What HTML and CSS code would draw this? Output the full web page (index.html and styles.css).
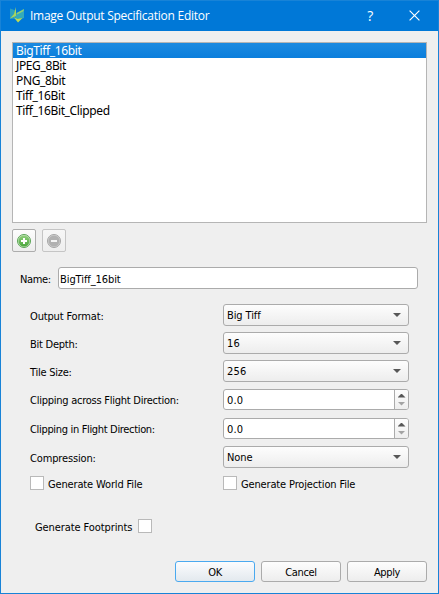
FILE: index.html
```html
<!DOCTYPE html>
<html lang="en">
<head>
<meta charset="utf-8">
<title>Image Output Specification Editor</title>
<link rel="stylesheet" href="styles.css">
</head>
<body>
<div class="window">
  <header class="titlebar">
    <svg class="logo" width="16" height="18" viewBox="0 0 16 18">
      <path d="M1 2.500 7 4.500v8L1 13z" fill="#2b9fc0"/>
      <path d="M7 1v9L1 12.500 5 8z" fill="#a9d45c"/>
      <path d="M15 3 14.500 7 7.500 10V7z" fill="#8fd077"/>
      <path d="M7 9 15 5v7l-8 2z" fill="#35aaba"/>
      <path d="M5 11.500 8.500 13l5-1L9 16.500z" fill="#bfdc50"/>
    </svg>
    <h1 class="title">Image Output Specification Editor</h1>
    <span class="help">?</span>
    <svg class="close" width="11" height="11" viewBox="0 0 11 11"><path d="M.6.6 10.4 10.4M10.4.6.6 10.4" stroke="#fff" stroke-width="1.15"/></svg>
  </header>
  <main class="content">
    <ul class="list">
      <li class="selected">BigTiff_16bit</li>
      <li>JPEG_8Bit</li>
      <li>PNG_8bit</li>
      <li>Tiff_16Bit</li>
      <li>Tiff_16Bit_Clipped</li>
    </ul>
    <div class="tools">
      <button class="tool"><svg width="16" height="16" viewBox="0 0 16 16"><defs><linearGradient id="g" x2="0" y2="1"><stop stop-color="#91d07d"/><stop offset="1" stop-color="#4aa63b"/></linearGradient></defs><circle cx="8" cy="8" r="6.5" fill="#cfe8c6" stroke="#5aa455"/><circle cx="8" cy="8" r="5.5" fill="url(#g)"/><path d="M8 5v6M5 8h6" stroke="#fff" stroke-width="2"/></svg></button>
      <button class="tool off"><svg width="16" height="16" viewBox="0 0 16 16"><circle cx="8" cy="8" r="6.5" fill="#d4d4d4" stroke="#a6a6a6"/><circle cx="8" cy="8" r="5.5" fill="#b1b1b1"/><path d="M5 8h6" stroke="#f4f4f4" stroke-width="2"/></svg></button>
    </div>
    <div class="name-row"><label class="name-label">Name:</label><div class="field">BigTiff_16bit</div></div>
    <div class="form">
      <label class="wide">Output Format:</label><div class="combo">Big Tiff<i class="down"></i></div>
      <label>Bit Depth:</label><div class="combo num">16<i class="down"></i></div>
      <label>Tile Size:</label><div class="combo num">256<i class="down"></i></div>
      <label>Clipping across Flight Direction:</label><div class="spin num"><span>0.0</span><div class="steps"><i class="up"></i><i class="down pale"></i></div></div>
      <label class="tight">Clipping in Flight Direction:</label><div class="spin num"><span>0.0</span><div class="steps"><i class="up"></i><i class="down pale"></i></div></div>
      <label class="wide">Compression:</label><div class="combo">None<i class="down"></i></div>
    </div>
    <div class="checks">
      <div class="check"><i class="box"></i><span>Generate World File</span></div>
      <div class="check"><i class="box"></i><span>Generate Projection File</span></div>
    </div>
    <div class="footprints"><span>Generate Footprints</span><i class="box"></i></div>
    <footer class="actions">
      <button class="button default">OK</button>
      <button class="button">Cancel</button>
      <button class="button">Apply</button>
    </footer>
  </main>
</div>
</body>
</html>
```
FILE: styles.css
```css
* { box-sizing: border-box; }
body { margin: 0; background: #efefef; color: #000; font: 11px/14px "DejaVu Sans Condensed", "DejaVu Sans", sans-serif; font-stretch: condensed; letter-spacing: -0.35px; white-space: nowrap; }
.window { width: 439px; height: 594px; border: 1px solid #1883d7; background: #efefef; }
.titlebar { height: 30px; background: #0078d7; display: flex; align-items: center; color: #fff; padding: 0 18px 0 8px; }
.logo { margin: 0 5px 2px 0; }
.title { margin: 0; flex: 1; font: 12px/16px "Open Sans", sans-serif; letter-spacing: -0.26px; }
.help { font: 14px/16px "Open Sans", sans-serif; margin-right: 36px; }
.close { margin-bottom: 2px; }
.content { padding: 11px; }
.list { margin: 0; padding: 0; list-style: none; height: 181px; border: 1px solid #b5b5b5; background: #fff; font: 12px/15px "Noto Sans", sans-serif; letter-spacing: -0.37px; }
.list li { height: 15px; padding-left: 3px; }
.list .selected { background: linear-gradient(#1c8ae0, #0b7edc); color: #fff; }
.tools { display: flex; gap: 6px; margin-top: 6px; }
.tool { width: 24px; height: 23px; padding: 0; border: 1px solid #adadad; border-radius: 2px; background: linear-gradient(#fdfdfd, #ededed); display: flex; align-items: center; justify-content: center; }
.tool.off { border-color: #c5c5c5; background: linear-gradient(#f7f7f7, #eee); }
.name-row { display: flex; align-items: center; margin: 15px 9px 0 8px; height: 22px; }
.name-label { width: 38px; padding-top: 3px; }
.field { flex: 1; height: 22px; line-height: 23px; letter-spacing: -0.08px; }
.field, .spin, .combo { border: 1px solid #ababab; border-radius: 3px; background: #fff; padding-left: 1px; }
.form { margin: 15px 18px 0 17px; display: grid; grid-template-columns: 193px 186px; grid-template-rows: 22px 22px 22px 23px 23px 22px; gap: 6px 1px; align-items: center; }
.form label { padding: 3px 0 0 1px; letter-spacing: -0.25px; }
.form .wide { letter-spacing: -0.15px; }
.form .tight { letter-spacing: -0.33px; }
.combo, .spin { display: flex; align-items: center; padding: 2px 0 0 3px; height: 22px; letter-spacing: -0.1px; }
.combo { justify-content: space-between; padding-right: 7px; background: linear-gradient(#fdfdfd, #ededed); }
.combo .down { margin-bottom: 2px; }
.spin { height: 21px; padding-top: 0; justify-content: space-between; }
.spin span { padding-top: 2px; }
.num { letter-spacing: 0.15px; }
.steps { width: 14px; height: 19px; border-left: 1px solid #ababab; background: linear-gradient(#fdfdfd, #eee); display: flex; flex-direction: column; align-items: center; justify-content: center; gap: 4px; border-radius: 0 2px 2px 0; }
.down, .up { width: 8px; height: 4px; background: #575757; clip-path: polygon(0 0, 100% 0, 50% 100%); }
.up { clip-path: polygon(50% 0, 100% 100%, 0 100%); }
.pale { background: #a3a3a3; }
.checks { display: grid; grid-template-columns: 193px auto; margin: 8px 0 0 18px; letter-spacing: -0.15px; }
.check, .footprints { display: flex; align-items: center; height: 14px; gap: 4px; }
.box { width: 14px; height: 14px; border: 1px solid #b9b9b9; background: #fff; }
.footprints { margin: 29px 0 0 23px; gap: 6px; letter-spacing: -0.09px; }
.check span, .footprints span { padding-top: 3px; }
.actions { display: flex; justify-content: flex-end; gap: 6px; margin-top: 28px; }
.button { width: 80px; height: 21px; padding: 2px 0 0; border: 1px solid #ababab; border-radius: 3px; background: linear-gradient(#fdfdfd, #ededed); color: #000; font: inherit; letter-spacing: inherit; }
.default { border-color: #4aa9ef; background: linear-gradient(#fbfcfe, #e3e9ee); }
```
